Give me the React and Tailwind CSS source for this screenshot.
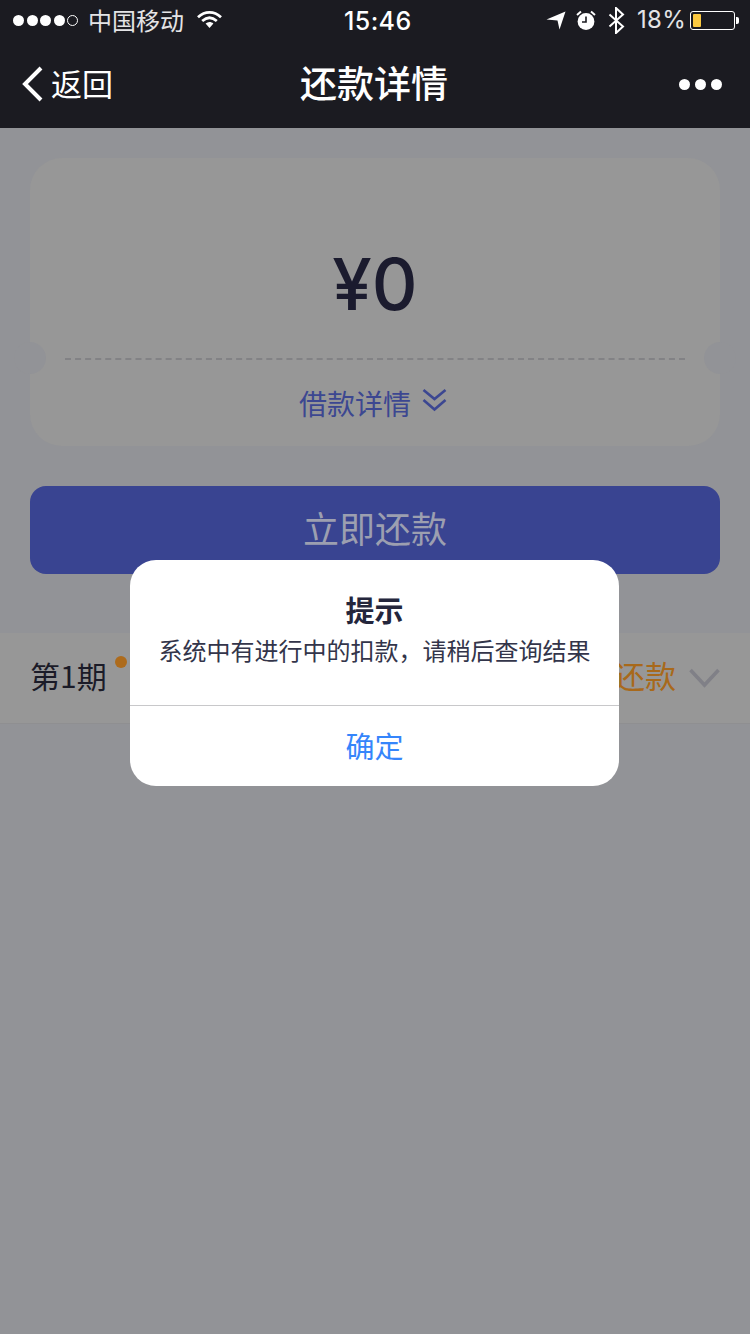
const cjk = { fontFamily: '"Noto Sans CJK SC", "Noto Sans", sans-serif' };

const StatusBar = () => (
  <div className="h-10 flex items-center text-[#e4e4e6] pl-[13px] pr-[11px] relative">
    <div className="flex items-center gap-[2.5px]">
      {[0, 1, 2, 3].map((i) => (
        <span key={i} className="w-[11px] h-[11px] rounded-full bg-white" />
      ))}
      <span className="w-[11px] h-[11px] rounded-full border border-white" />
    </div>
    <span className="ml-[10px] text-[24px] leading-none">中国移动</span>
    <svg className="ml-[13px] -mt-[2px]" width="25" height="19" viewBox="0 0 25 19" fill="none">
      <path d="M1 7.2C8 0.8 17 0.8 24 7.2" stroke="#fff" strokeWidth="2.8" />
      <path d="M5.2 11C9.8 7 15.2 7 19.8 11" stroke="#fff" strokeWidth="2.8" />
      <path d="M8.6 13.6C11 11.6 14 11.6 16.4 13.6L12.5 18Z" fill="#fff" />
    </svg>
    <span
      className="absolute left-[344px] top-[6px] text-[25px] leading-[30px] font-medium tracking-[0.4px] text-white"
      style={{ fontFamily: '"Inter", sans-serif' }}
    >
      15:46
    </span>
    <div className="ml-auto flex items-center">
      <svg width="20" height="20" viewBox="0 0 20 20">
        <path d="M0.5 9.5L19.5 1.5L13.5 19.5L11.5 10.5Z" fill="#fff" />
      </svg>
      <svg className="ml-[10px]" width="20" height="21" viewBox="0 0 20 21">
        <circle cx="10" cy="11.5" r="8.4" fill="#fff" />
        <path d="M10 6.5V12H6" stroke="#1b1b21" strokeWidth="1.6" fill="none" />
        <path d="M1 5L5 1.6M19 5L15 1.6" stroke="#fff" strokeWidth="2" />
      </svg>
      <svg className="ml-[12px]" width="17" height="27" viewBox="0 0 17 27" fill="none">
        <path d="M1.5 7.5L15 19.5L8 26V1L15 7.5L1.5 19.5" stroke="#fff" strokeWidth="2" />
      </svg>
      <span
        className="ml-[12px] text-[24px] leading-none tracking-[0.3px]"
        style={{ fontFamily: '"Inter", sans-serif' }}
      >
        18%
      </span>
      <div className="ml-[4px] w-[45px] h-[19px] rounded-[3px] border border-white p-[2px]">
        <div className="w-[8px] h-full bg-[#fbc941] rounded-[1px]" />
      </div>
      <span className="w-[3px] h-[7px] bg-white rounded-r-[2px] ml-[1px]" />
    </div>
  </div>
);

const NavBar = () => (
  <div className="h-[88px] flex items-center justify-between pl-[21px] pr-[28px] relative text-white">
    <div className="flex items-center">
      <svg width="23" height="36" viewBox="0 0 23 36" fill="none">
        <path d="M20 2L4 18L20 34" stroke="#fff" strokeWidth="4" />
      </svg>
      <span className="ml-[7px] -mt-[3px] text-[31px] leading-none">返回</span>
    </div>
    <span className="absolute left-0 right-[2px] -mt-[4px] text-center text-[37px] leading-none font-medium">还款详情</span>
    <div className="flex items-center gap-[5px]">
      <span className="w-[11px] h-[11px] rounded-full bg-white" />
      <span className="w-[11px] h-[11px] rounded-full bg-white" />
      <span className="w-[11px] h-[11px] rounded-full bg-white" />
    </div>
  </div>
);

const TicketCard = () => (
  <div className="mx-[30px] mt-[30px] h-[288px] rounded-[32px] bg-[#979797] relative flex flex-col items-center">
    <span
      className="mt-[84px] text-[71px] leading-[84px] font-medium text-[#1b1b2e]"
      style={{ fontFamily: '"Inter", sans-serif' }}
    >
      ¥0
    </span>
    <div className="mt-[32px] w-[620px] border-t-2 border-dashed border-[#828285]" />
    <span className="absolute left-[-16px] top-[184px] w-[32px] h-[32px] rounded-full bg-[#929397]" />
    <span className="absolute right-[-16px] top-[184px] w-[32px] h-[32px] rounded-full bg-[#929397]" />
    <div className="mt-[23px] -ml-[4px] flex items-center text-[#3c4791]">
      <span className="text-[28px] leading-[40px]">借款详情</span>
      <svg className="ml-[11px] -mt-[6px]" width="25" height="24" viewBox="0 0 25 24" fill="none">
        <path d="M1.5 2L12.5 11L23.5 2M1.5 12L12.5 21.5L23.5 12" stroke="#3c4791" strokeWidth="2.6" />
      </svg>
    </div>
  </div>
);

const Alert = () => (
  <div className="absolute left-[130px] top-[560px] w-[489px] h-[226px] rounded-[26px] bg-white flex flex-col">
    <div className="h-[146px] flex flex-col items-center border-b border-[#c8c8ca]">
      <span className="mt-[31px] text-[29px] leading-[36px] font-bold text-[#24263c]">提示</span>
      <span className="mt-[5px] text-[24px] leading-[36px] text-[#33354a]">
        系统中有进行中的扣款，请稍后查询结果
      </span>
    </div>
    <div className="flex-1 flex items-center justify-center text-[29px] text-[#3585fb]">确定</div>
  </div>
);

export default function App() {
  return (
    <div className="w-[750px] h-[1334px] bg-[#929397] relative overflow-hidden" style={cjk}>
      <div className="bg-[#1b1b21]">
        <StatusBar />
        <NavBar />
      </div>
      <TicketCard />
      <button className="block mx-[30px] mt-[40px] w-[690px] h-[88px] pb-[6px] rounded-[16px] bg-[#394491] text-[36px] text-[#9c9fb0]">
        立即还款
      </button>
      <div className="mt-[59px] h-[91px] bg-[#979797] border-b border-[#8f8f91] flex items-center justify-between pl-[30px] pr-[30px]">
        <div className="flex items-start -mt-[6px]">
          <span className="text-[30px] leading-[42px] text-[#1b1b28]">第1期</span>
          <span className="ml-[8px] mt-[2px] w-[12px] h-[12px] rounded-full bg-[#ad6b1c]" />
        </div>
        <div className="flex items-center">
          <span className="-mt-[6px] text-[31px] leading-[42px] text-[#a8691b]">待还款</span>
          <svg className="ml-[13px]" width="31" height="20" viewBox="0 0 31 20" fill="none">
            <path d="M1.5 2L15.5 17L29.5 2" stroke="#808087" strokeWidth="3.6" />
          </svg>
        </div>
      </div>
      <Alert />
    </div>
  );
}
